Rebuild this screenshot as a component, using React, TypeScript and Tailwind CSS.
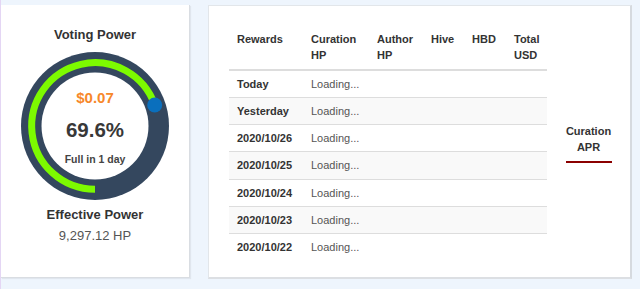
import React from "react";

const rows = [
  "Today",
  "Yesterday",
  "2020/10/26",
  "2020/10/25",
  "2020/10/24",
  "2020/10/23",
  "2020/10/22",
];

function Gauge() {
  return (
    <div className="relative w-[148px] h-[148px]">
      <svg width="148" height="148" viewBox="0 0 148 148">
        <circle cx="74" cy="74" r="74" fill="#34475e" />
        <circle cx="74" cy="74" r="53.5" fill="#ffffff" />
        <path
          d="M74 137.3 A63.3 63.3 0 1 1 133.7 53.0"
          fill="none"
          stroke="#7dfa00"
          strokeWidth="7"
        />
        <circle cx="133.7" cy="53" r="7.5" fill="#0a6fbd" />
      </svg>
      <div className="absolute inset-0 flex flex-col items-center">
        <div className="mt-[37px] text-[15px] leading-[18px] font-bold text-[#f7882a]">$0.07</div>
        <div className="mt-[11px] text-[20.5px] leading-[24px] font-bold text-[#383838]">69.6%</div>
        <div className="mt-[10.5px] text-[10.5px] leading-[13px] font-bold text-[#444]">Full in 1 day</div>
      </div>
    </div>
  );
}

export default function App() {
  return (
    <div
      className="w-[640px] h-[289px] bg-[#eef5fd] flex items-start overflow-hidden"
      style={{ fontFamily: '"Liberation Sans", Arial, sans-serif' }}
    >
      <div className="w-px h-full bg-[#e4d6f4]" />
      <div className="mt-[5px] w-[189px] h-[273px] bg-white border-r border-b border-[#d9dde2] shadow-[1px_1px_1px_rgba(0,0,0,0.06)] flex flex-col items-center pt-[22px]">
        <div className="text-[13px] leading-[16px] font-bold text-[#333]">Voting Power</div>
        <div className="mt-[9px]">
          <Gauge />
        </div>
        <div className="mt-[7px] text-[13px] leading-[16px] font-bold text-[#333]">Effective Power</div>
        <div className="mt-[5px] text-[13px] leading-[16px] text-[#555]">9,297.12 HP</div>
      </div>
      <div className="ml-[18px] mt-[5px] w-[424px] h-[274px] bg-white border border-[#e2e6ea] border-r-2 border-r-[#d6dadf] border-b-2 border-b-[#dcdfe3] flex pt-[20px] pl-[20px]">
        <table className="table-fixed w-[318px] border-collapse text-[11px] leading-[16.17px] text-[#333] self-start">
          <thead>
            <tr className="border-b-2 border-[#dddddd] text-left align-top">
              <th className="w-[74px] px-[8px] pt-[5px] pb-[5.5px] font-bold">Rewards</th>
              <th className="w-[66px] px-[8px] pt-[5px] pb-[5.5px] font-bold">Curation<br />HP</th>
              <th className="w-[54px] px-[8px] pt-[5px] pb-[5.5px] font-bold">Author<br />HP</th>
              <th className="w-[41px] px-[8px] pt-[5px] pb-[5.5px] font-bold">Hive</th>
              <th className="w-[42px] px-[8px] pt-[5px] pb-[5.5px] font-bold">HBD</th>
              <th className="w-[41px] px-[8px] pt-[5px] pb-[5.5px] font-bold">Total<br />USD</th>
            </tr>
          </thead>
          <tbody>
            {rows.map((r, i) => (
              <tr
                key={r}
                className={
                  (i % 2 === 1 ? "bg-[#f9f9f9] " : "bg-white ") +
                  (i < rows.length - 1 ? "border-b border-[#dddddd]" : "")
                }
              >
                <td className="px-[8px] py-[5px] font-bold whitespace-nowrap">{r}</td>
                <td className="px-[8px] py-[5px] text-[#555] whitespace-nowrap">Loading...</td>
                <td className="px-[8px] py-[5px]"></td>
                <td className="px-[8px] py-[5px]"></td>
                <td className="px-[8px] py-[5px]"></td>
                <td className="px-[8px] py-[5px]"></td>
              </tr>
            ))}
          </tbody>
        </table>
        <div className="flex-1 flex items-center justify-center pb-[18px]">
          <div className="flex flex-col items-center">
            <div className="text-[11px] leading-[16.5px] font-bold text-[#333] text-center">Curation<br />APR</div>
            <div className="mt-[5px] w-[46px] h-[2px] bg-[#8b0000]" />
          </div>
        </div>
      </div>
    </div>
  );
}
